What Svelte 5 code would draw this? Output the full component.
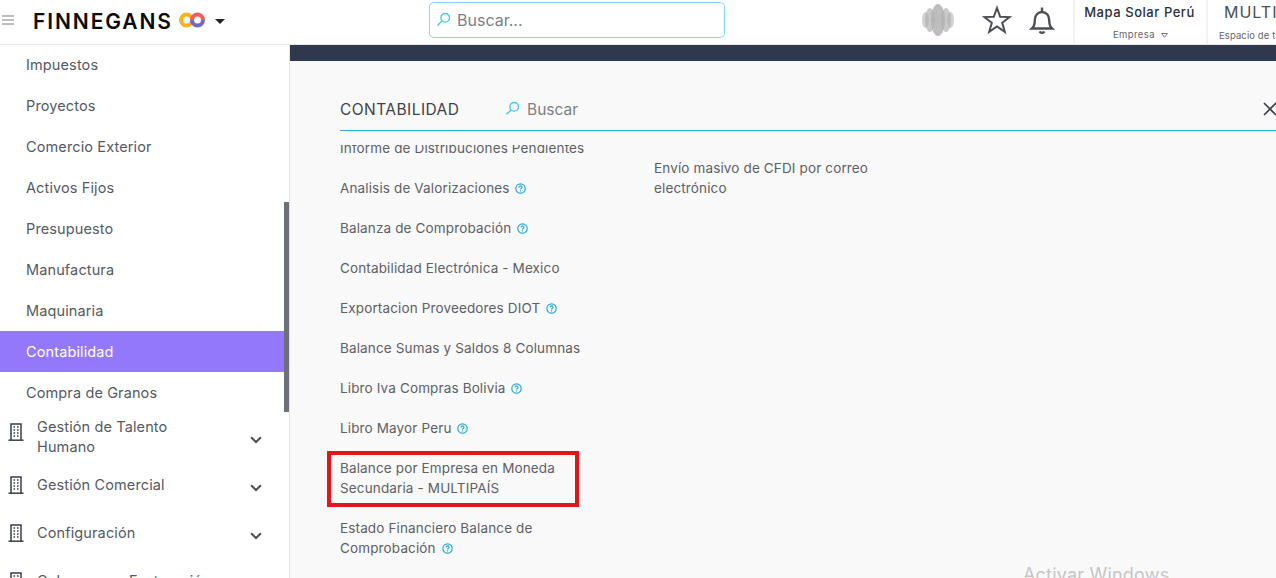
<script>
  const modules = ['Impuestos', 'Proyectos', 'Comercio Exterior', 'Activos Fijos', 'Presupuesto', 'Manufactura', 'Maquinaria', 'Contabilidad', 'Compra de Granos'];
  const groups = [
    { name: 'Gestión de Talento Humano', cls: 'tall' },
    { name: 'Gestión Comercial', cls: '' },
    { name: 'Configuración', cls: '' },
    { name: 'Cobranzas y Facturación', cls: '' }
  ];
  const reports = [
    { name: 'Informe de Distribuciones Pendientes', help: false },
    { name: 'Analisis de Valorizaciones', help: true },
    { name: 'Balanza de Comprobación', help: true },
    { name: 'Contabilidad Electrónica - Mexico', help: false },
    { name: 'Exportacion Proveedores DIOT', help: true },
    { name: 'Balance Sumas y Saldos 8 Columnas', help: false },
    { name: 'Libro Iva Compras Bolivia', help: true },
    { name: 'Libro Mayor Peru', help: true },
    { name: 'Balance por Empresa en Moneda Secundaria - MULTIPAÍS', help: false, marked: true },
    { name: 'Estado Financiero Balance de Comprobación', help: true }
  ];
</script>

{#snippet lens(size)}
  <svg class="lens" width={size} height={size} viewBox="0 0 16 16" fill="none" stroke="#45c6ee" stroke-width="1.5">
    <circle cx="9.8" cy="6.2" r="4.6" />
    <path d="M6.4 9.6 1.5 14.5" />
  </svg>
{/snippet}

{#snippet help()}
  <svg class="help" width="11" height="11" viewBox="0 0 11 11" fill="none" stroke="#27aed0" stroke-width="1.2">
    <circle cx="5.5" cy="5.5" r="4.7" />
    <path d="M4 4.4c0-2 3-2 3 0 0 1-1.500 1-1.500 2.100" />
    <path d="M5.500 7.300v1.200" />
  </svg>
{/snippet}

<div class="page">
  <header class="top">
    <div class="brand">
      <span class="burger"><i></i><i></i><i></i></span>
      <span class="wordmark">FINNEGANS</span>
      <svg class="logo" width="27" height="16" viewBox="0 0 27 16" fill="none" stroke-width="4">
        <circle cx="7.500" cy="8" r="5.500" stroke="#fdb01c" />
        <path d="M13 8a5.500 5.500 0 0 1 11 0" stroke="#ee5d60" />
        <path d="M24 8a5.500 5.500 0 0 1-11 0" stroke="#6e68c9" />
      </svg>
      <span class="caret"></span>
    </div>
    <div class="search-wrap">
      <div class="search">
        {@render lens(15)}
        <span>Buscar...</span>
      </div>
    </div>
    <div class="tools">
      <svg class="orb" width="34" height="34" viewBox="0 0 34 34" fill="#b2b2b2">
        <ellipse cx="4.500" cy="17" rx="3.500" ry="8" opacity=".6" />
        <ellipse cx="29.500" cy="17" rx="3.500" ry="8" opacity=".6" />
        <ellipse cx="9" cy="17" rx="5" ry="12" opacity=".7" />
        <ellipse cx="25" cy="17" rx="5" ry="12" opacity=".7" />
        <ellipse cx="17" cy="17" rx="7" ry="16" opacity=".85" />
      </svg>
      <svg class="star" width="30" height="30" viewBox="0 0 30 30" fill="none" stroke="#4c4f55" stroke-width="2">
        <path d="M15 3l3.200 8.800 9.300.3-7.300 5.700 2.600 9-7.800-5.300-7.800 5.300 2.600-9-7.300-5.700 9.300-.3z" />
      </svg>
      <svg class="bell" width="26" height="30" viewBox="0 0 26 30" fill="none" stroke="#4c4f55" stroke-width="2.400">
        <path d="M3 23.500h20c-2.200-2-2.800-4-2.800-8.500 0-4.500-3-8-7.200-8s-7.200 3.500-7.200 8c0 4.500-.6 6.500-2.800 8.500z" />
        <path d="M13 2.500v4.500" />
        <path d="M10.500 26.500c1 1.700 4 1.700 5 0" />
      </svg>
    </div>
    <div class="ctx company">
      <strong>Mapa Solar Perú</strong>
      <small>Empresa
        <svg width="7" height="5" viewBox="0 0 7 5" fill="none" stroke="#777"><path d="M.6.500h5.800L3.500 4.300z" /></svg>
      </small>
    </div>
    <div class="ctx space">
      <b>MULTI</b>
      <small>Espacio de t</small>
    </div>
  </header>

  <div class="body">
    <aside class="side">
      <div class="sub">
        {#each modules as m}
          <div class="sub-item" class:active={m === 'Contabilidad'}>{m}</div>
        {/each}
      </div>
      {#each groups as g}
        <div class="group {g.cls}">
          <svg class="bldg" width="16" height="18" viewBox="0 0 16 18" fill="none" stroke="#3a3f48">
            <path d="M3 17V1h10v16" stroke-width="1.500" />
            <path d="M.500 17.200h15" stroke-width="1.500" />
            <path d="M5.500 4h1.600M9 4h1.600M5.500 7h1.600M9 7h1.600M5.500 10h1.600M9 10h1.600M5.500 13h1.600M9 13h1.600" stroke-width="1.600" />
          </svg>
          <span class="group-name">{g.name}</span>
          <svg class="chev" width="12" height="8" viewBox="0 0 12 8" fill="none" stroke="#4b505a" stroke-width="2">
            <path d="M1 1.200 6 6l5-4.800" />
          </svg>
        </div>
      {/each}
      <div class="thumb"></div>
    </aside>

    <main class="panel">
      <div class="band"></div>
      <div class="panel-head">
        <span class="title">CONTABILIDAD</span>
        {@render lens(15)}
        <span class="panel-search">Buscar</span>
        <svg class="close" width="16" height="16" viewBox="0 0 16 16" stroke="#3b3f46" stroke-width="1.600">
          <path d="M2 2l12 12M14 2 2 14" />
        </svg>
      </div>
      <div class="lists">
        <ul class="col">
          {#each reports as r}
            <li class:marked={r.marked}>{r.name}{#if r.help}&nbsp;{@render help()}{/if}</li>
          {/each}
        </ul>
        <ul class="col second">
          <li>Envío masivo de CFDI por correo electrónico</li>
        </ul>
      </div>
      <div class="watermark">Activar Windows</div>
    </main>
  </div>
</div>

<style>
  :global(body) {
    margin: 0;
    overflow: hidden;
  }

  .page {
    width: 1276px;
    height: 578px;
    overflow: hidden;
    font-family: Inter, "Open Sans", sans-serif;
    color: #4c4f55;
    background: #fff;
  }

  .top {
    height: 44px;
    display: flex;
    align-items: stretch;
    background: #fff;
    border-bottom: 1px solid #e8e8e8;
  }

  .brand {
    width: 429px;
    flex: none;
    display: flex;
    align-items: center;
  }

  .burger {
    width: 12px;
    margin: 0 0 5px 2px;
    display: flex;
    flex-direction: column;
    gap: 2px;
  }

  .burger i {
    height: 2px;
    background: #bdbdbd;
  }

  .wordmark {
    margin: 0 0 2px 19px;
    font-size: 21px;
    font-weight: 600;
    color: #0b0b0b;
    letter-spacing: 1.9px;
  }

  .logo {
    margin: 0 0 4px 6px;
  }

  .caret {
    margin: 0 0 1px 9px;
    border: 5px solid transparent;
    border-top-color: #222;
    border-bottom-width: 0;
  }

  .search-wrap {
    width: 296px;
    flex: none;
    display: flex;
    align-items: center;
    padding-bottom: 5px;
  }

  .search {
    flex: 1;
    height: 36px;
    box-sizing: border-box;
    border: 1px solid #7fdcf8;
    border-radius: 5px;
    display: flex;
    align-items: center;
    gap: 6px;
    padding-left: 6px;
    font-size: 16px;
    color: #7c7f85;
  }

  .tools {
    flex: 1;
    display: flex;
    align-items: center;
    justify-content: flex-end;
    padding: 0 18px 5px 0;
  }

  .orb {
    margin-right: 27px;
  }

  .star {
    margin-right: 17px;
  }

  .ctx {
    flex: none;
    border-left: 2px solid #f1f1f1;
    display: flex;
    flex-direction: column;
    align-items: center;
    box-sizing: border-box;
    white-space: nowrap;
    overflow: hidden;
  }

  .company {
    width: 133px;
  }

  .space {
    width: 70px;
    align-items: flex-start;
    padding-left: 11px;
  }

  .ctx strong {
    font-size: 13px;
    font-weight: 500;
    color: #2b2f38;
    margin: 4px 2px 0 0;
    line-height: 16px;
    letter-spacing: 0.55px;
  }

  .ctx b {
    font-size: 16px;
    font-weight: 400;
    margin-top: 3px;
    line-height: 18px;
    letter-spacing: 1px;
    padding-left: 5px;
  }

  .ctx small {
    font-size: 9.500px;
    margin-top: 9px;
    color: #666;
    letter-spacing: 0.4px;
  }

  .ctx.space small {
    letter-spacing: 0.1px;
  }

  .ctx small svg {
    margin-left: 3px;
  }

  .body {
    height: 533px;
    display: flex;
  }

  .side {
    position: relative;
    width: 289px;
    flex: none;
    overflow: hidden;
    background: #fff;
    border-right: 1px solid #e4e4e4;
  }

  .sub {
    width: 284px;
    margin-top: -1px;
  }

  .sub-item {
    height: 41px;
    line-height: 41px;
    padding-left: 26px;
    font-size: 14.500px;
    letter-spacing: 0.12px;
    color: #555962;
  }

  .sub-item.active {
    background: #9478fb;
    color: #fff;
  }

  .group {
    display: flex;
    align-items: flex-start;
    height: 48px;
    width: 284px;
    font-size: 14.500px;
    letter-spacing: 0.12px;
    color: #555962;
  }

  .group.tall {
    height: 58px;
    padding-top: 3px;
  }

  .bldg {
    margin: 2px 0 0 8px;
    flex: none;
  }

  .tall .bldg {
    margin-top: 7px;
  }

  .group-name {
    margin: 1px 0 0 13px;
    width: 180px;
    line-height: 20px;
  }

  .chev {
    margin: 10px 0 0 33px;
    flex: none;
  }

  .tall .chev {
    margin-top: 20px;
  }

  .thumb {
    position: absolute;
    right: 0;
    top: 157px;
    width: 5px;
    height: 210px;
    background: #6b7079;
  }

  .panel {
    position: relative;
    flex: 1;
    min-width: 0;
    background: #f9f9f9;
    overflow: hidden;
  }

  .band {
    height: 16px;
    background: #2f394d;
  }

  .panel-head {
    height: 70px;
    box-sizing: border-box;
    margin-left: 50px;
    padding-top: 39px;
    border-bottom: 1px solid #1fb2d4;
    display: flex;
    align-items: flex-start;
    font-size: 15.500px;
  }

  .title {
    width: 165px;
    line-height: 20px;
    color: #3e4149;
    letter-spacing: 0.45px;
  }

  .panel-head .lens {
    margin-top: 1px;
  }

  .panel-search {
    margin-left: 7px;
    line-height: 20px;
    color: #7c7f85;
  }

  .close {
    margin-left: auto;
    margin-top: 1px;
    margin-right: -2px;
  }

  .lists {
    height: 433px;
    margin-top: 14px;
    padding-left: 50px;
    overflow: hidden;
    display: flex;
  }

  .col {
    list-style: none;
    margin: 0;
    padding: 0;
    width: 314px;
    flex: none;
    font-size: 13.500px;
    letter-spacing: 0.14px;
    line-height: 20px;
  }

  .col li {
    position: relative;
    width: 252px;
    margin-bottom: 20px;
    color: #5d6065;
  }

  .col li.marked {
    width: 239px;
  }

  .col li:first-child {
    margin-top: -7px;
  }

  .col.second li:first-child {
    width: 240px;
    margin-top: 13px;
  }

  .marked::before {
    content: '';
    position: absolute;
    inset: -7px 0 -9px -13px;
    border: 4px solid #e3151a;
  }

  .help {
    vertical-align: -1px;
    margin-left: 2px;
  }

  .watermark {
    position: absolute;
    left: 733px;
    top: 519px;
    font-size: 18px;
    letter-spacing: 0.2px;
    color: #c6c6c6;
    white-space: nowrap;
  }
</style>
